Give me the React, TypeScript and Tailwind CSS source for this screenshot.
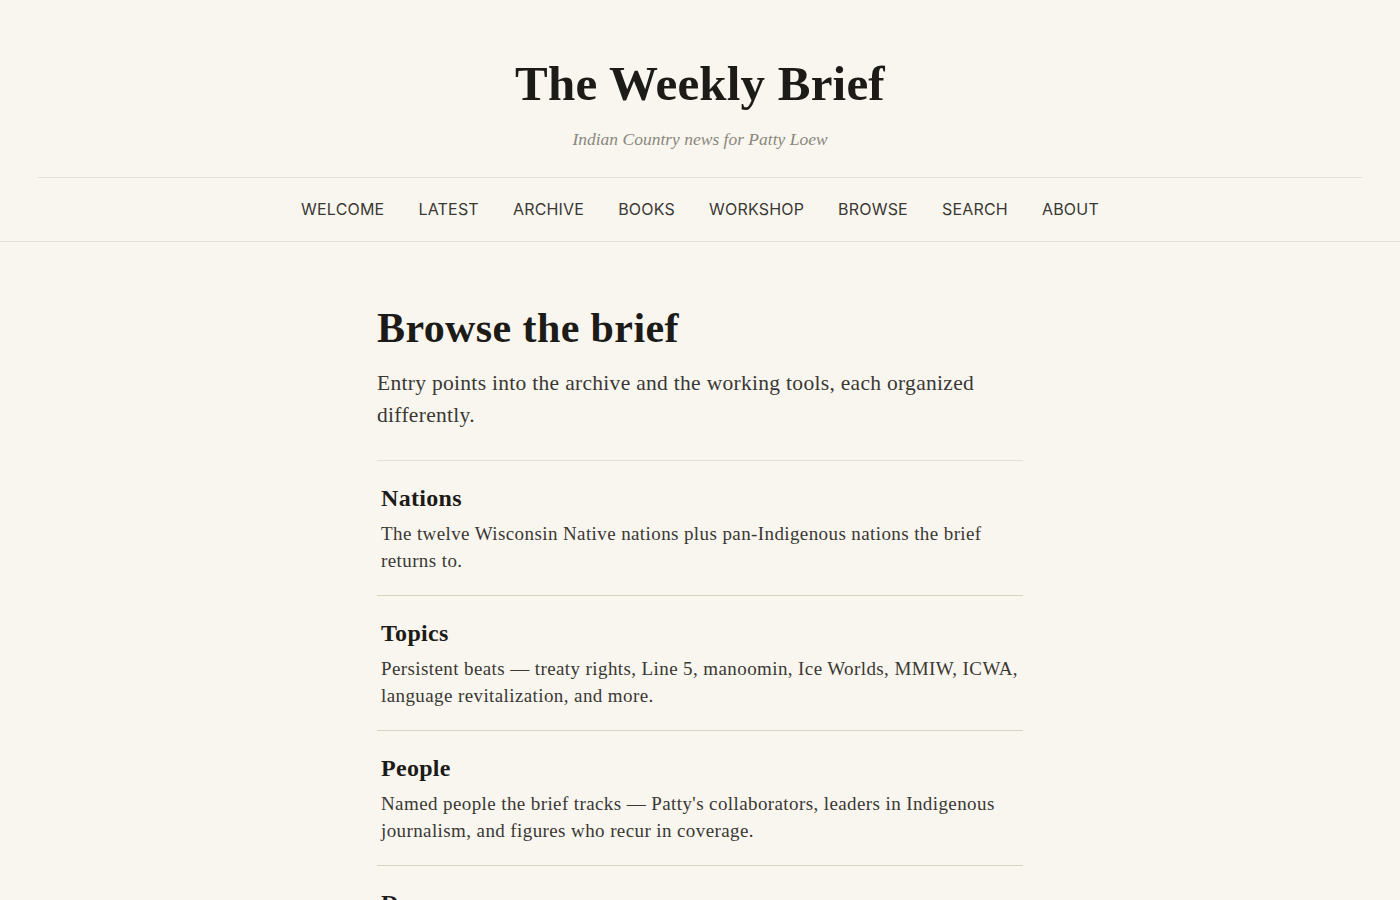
import React from "react";

const serif = { fontFamily: '"Liberation Serif", "DejaVu Serif", serif' };

const navItems = ["Welcome", "Latest", "Archive", "Books", "Workshop", "Browse", "Search", "About"];

const items = [
  {
    title: "Nations",
    desc: "The twelve Wisconsin Native nations plus pan-Indigenous nations the brief returns to.",
  },
  {
    title: "Topics",
    desc: "Persistent beats — treaty rights, Line 5, manoomin, Ice Worlds, MMIW, ICWA, language revitalization, and more.",
  },
  {
    title: "People",
    desc: "Named people the brief tracks — Patty's collaborators, leaders in Indigenous journalism, and figures who recur in coverage.",
  },
  {
    title: "Days",
    desc: "Every daily brief, newest first, with its lead stories and the nations and topics it touched.",
  },
];

export default function App() {
  return (
    <div className="min-h-screen bg-[#f9f6f0] text-[#1c1b18]">
      <header className="border-b border-[#e4e0d6]">
        <div className="px-[38px]">
          <div className="flex flex-col items-center pt-[54px] pb-[25px] border-b border-[#e4e0d6]">
            <h1 className="text-[49px] leading-[60px] font-bold tracking-[0.2px] text-[#1c1b18]" style={serif}>
              The Weekly Brief
            </h1>
            <p className="mt-[12px] text-[17.5px] leading-[26px] italic text-[#8a867c]" style={serif}>
              Indian Country news for Patty Loew
            </p>
          </div>
        </div>
        <nav className="flex justify-center gap-[34px] pt-[20px] pb-[21px]" style={{ fontFamily: 'Inter, "Liberation Sans", sans-serif' }}>
          {navItems.map((n) => (
            <a key={n} className="text-[16px] leading-[22px] uppercase tracking-[0.2px] text-[#3a3833]">
              {n}
            </a>
          ))}
        </nav>
      </header>

      <main className="mx-auto w-[646px] pt-[62px]" style={serif}>
        <h2 className="text-[42px] leading-[48px] font-bold tracking-[0.4px] text-[#1c1b18]">Browse the brief</h2>
        <p className="mt-[15px] text-[21.5px] leading-[32px] tracking-[0.3px] text-[#3a3833]">
          Entry points into the archive and the working tools, each organized differently.
        </p>
        <div className="mt-[29px] border-t border-[#e4e0d6]">
          {items.map((it, i) => (
            <div key={it.title} className={`px-[4px] pt-[22px] pb-[21px] ${i === 0 ? "" : "border-t border-[#d8d3c3]"}`}>
              <h3 className="text-[24px] leading-[30px] font-bold tracking-[0.3px] text-[#1c1b18]">{it.title}</h3>
              <p className="mt-[7px] text-[19px] leading-[27px] tracking-[0.4px] text-[#3a3833]">{it.desc}</p>
            </div>
          ))}
        </div>
      </main>
    </div>
  );
}
